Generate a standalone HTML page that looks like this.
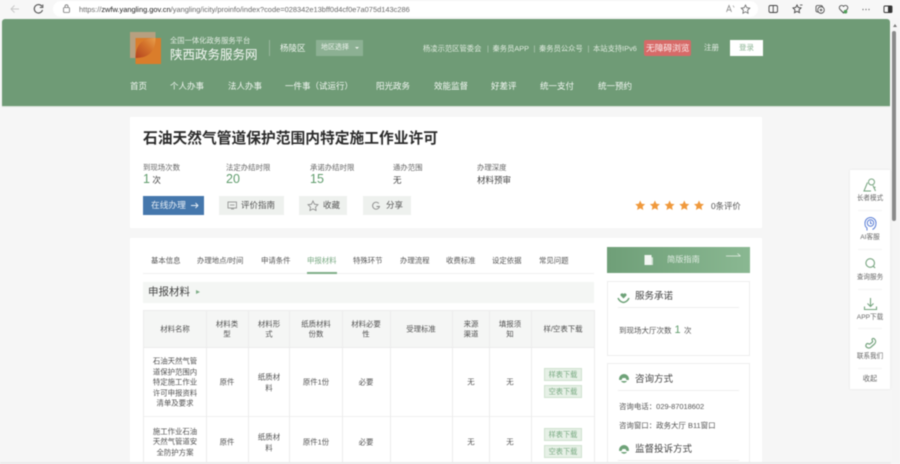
<!DOCTYPE html>
<html lang="zh">
<head>
<meta charset="utf-8">
<title>陕西政务服务网</title>
<style>
html,body{margin:0;padding:0;width:900px;height:464px;overflow:hidden;background:#f6f6f6}
body{font-family:"Liberation Sans","Noto Sans CJK SC",sans-serif;position:relative}
#w{position:absolute;left:0;top:0;width:900px;height:464px;overflow:hidden;filter:blur(.4px)}
.a{position:absolute;white-space:nowrap}
.b{position:absolute}
.nav{position:absolute;top:80px;font-size:8.5px;line-height:12px;color:#f2f7f2;white-space:nowrap}
.tl{position:absolute;top:43px;font-size:7.3px;line-height:11px;color:#dfeade;white-space:nowrap}
.tab{position:absolute;top:255px;font-size:7.4px;line-height:11px;color:#555;white-space:nowrap}
.lb{position:absolute;top:162px;font-size:7.4px;line-height:11px;color:#666;white-space:nowrap}
.v{position:absolute;top:171px;font-size:12.5px;line-height:16px;color:#5f9c6c;white-space:nowrap}
.btn{position:absolute;top:196px;height:19px;background:#eef1ee;color:#555;font-size:8.5px;line-height:19px;white-space:nowrap}
.l{position:absolute;background:#ececec}
.t{position:absolute;transform:translate(-50%,-50%);text-align:center;font-size:7.4px;line-height:10.6px;color:#505050;white-space:nowrap}
.dl{position:absolute;width:36px;height:11px;transform:translateX(-50%);background:#e6f0e6;border:1px solid #cfe2cf;color:#7bab84;font-size:7.2px;line-height:11px;text-align:center;box-sizing:content-box}
.side{position:absolute;left:850px;width:40px;text-align:center;font-size:6.6px;line-height:9px;color:#666;white-space:nowrap}
</style>
</head>
<body>
<div id="w">
<!-- browser chrome -->
<div class="b" style="left:0;top:0;width:900px;height:19px;background:#f7f7f7"></div>
<div class="b" style="left:53px;top:1px;width:705px;height:16px;background:#fff;border-radius:8px"></div>
<svg class="b" style="left:0;top:0" width="900" height="19" viewBox="0 0 900 19" fill="none">
<path d="M19 9H11M14.500 5.500L11 9l3.500 3.500" stroke="#c9c9c9" stroke-width="1"/>
<path d="M42 6.500A4.200 4.200 0 1 0 42.500 10" stroke="#555" stroke-width="1.100"/><path d="M42.800 4.500V7.500H39.800" stroke="#555" stroke-width="1"/>
<rect x="63.500" y="7.500" width="6" height="5" rx="1" stroke="#777" stroke-width=".8"/><path d="M65 7.500V6.300a1.500 1.500 0 0 1 3 0V7.500" stroke="#777" stroke-width=".8"/>
<path d="M723 12l2.500-6.500L728 12M724 10h3" stroke="#888" stroke-width=".8" transform="translate(3.500)"/><path d="M733 5.500l1.200 2" stroke="#888" stroke-width=".6"/>
<path d="M745.500 5l1.300 2.700 3 .4-2.200 2.100.5 3-2.600-1.400-2.600 1.400.5-3-2.200-2.100 3-.4z" stroke="#666" stroke-width=".8"/>
<rect x="769" y="5.500" width="8.500" height="7" rx="1.500" stroke="#444" stroke-width=".9"/><path d="M773.200 5.500v7" stroke="#444" stroke-width=".9"/>
<path d="M797 5l1.200 2.500 2.800.4-2 2 .5 2.800-2.500-1.300-2.500 1.300.5-2.800-2-2 2.800-.4z" stroke="#444" stroke-width=".9"/><path d="M800 5h2.500" stroke="#444" stroke-width=".8"/>
<rect x="816" y="5.500" width="6.500" height="6.500" rx="1.500" stroke="#444" stroke-width=".8"/><circle cx="821" cy="10" r="3.300" stroke="#444" stroke-width=".8" fill="#f7f7f7"/><path d="M821 8.500v3M819.500 10h3" stroke="#444" stroke-width=".7"/>
<path d="M843.500 13l-3.600-3.700a2.300 2.300 0 0 1 3.300-3.200l.3.300.4-.3a2.300 2.300 0 0 1 3.300 3.200z" stroke="#444" stroke-width=".9"/><circle cx="845.500" cy="11.700" r="1.800" fill="#4f9e58"/>
<circle cx="863" cy="9.500" r=".6" fill="#555"/><circle cx="866" cy="9.500" r=".6" fill="#555"/><circle cx="869" cy="9.500" r=".6" fill="#555"/>
<rect x="884" y="6" width="8" height="6.500" rx="1" stroke="#333" stroke-width=".9"/><rect x="888" y="6.500" width="3.500" height="5.500" fill="#333"/>
</svg>
<div class="a" style="left:79px;top:4px;font-size:7.450px;line-height:11px;color:#6a6a6a">https://<b style="color:#222;font-weight:400">zwfw.yangling.gov.cn</b>/yangling/icity/proinfo/index?code=028342e13bff0d4cf0e7a075d143c286</div>

<!-- header -->
<div class="b" style="left:2px;top:19px;width:888px;height:87px;background:#6f9b76;border-radius:3px 3px 0 0"></div>
<div class="b" style="left:2px;top:106px;width:888px;height:1px;background:#d9e3da"></div>
<svg class="b" style="left:129px;top:32px" width="34" height="32" viewBox="0 0 34 32">
<defs><linearGradient id="g" x1="0" y1="1" x2="1" y2="0"><stop offset="0" stop-color="#b4431f"/><stop offset=".6" stop-color="#d5752c"/><stop offset="1" stop-color="#e8a04d"/></linearGradient></defs>
<rect x="1" y="0" width="25.500" height="26" fill="#b7a080"/>
<rect x="6.500" y="6" width="25.500" height="26" fill="#da7d2b"/>
<path d="M6.500 26C6.500 13 13 6 26.500 6C26.500 19 20 26 6.500 26Z" fill="url(#g)"/>
</svg>
<div class="a" style="left:170px;top:35px;font-size:7.300px;line-height:11px;color:#e3ece3">全国一体化政务服务平台</div>
<div class="a" style="left:170px;top:46px;font-size:12.500px;line-height:18px;color:#f3f7f3">陕西政务服务网</div>
<div class="b" style="left:269px;top:40px;width:1px;height:16px;background:#98b79d"></div>
<div class="a" style="left:280px;top:42px;font-size:8.500px;line-height:12px;color:#eef4ee">杨陵区</div>
<div class="b" style="left:316px;top:40px;width:47px;height:16px;background:#8cb093"></div>
<div class="a" style="left:321px;top:43px;font-size:7px;line-height:10px;color:#e8f0e8">地区选择</div>
<div class="b" style="left:355px;top:47px;border-left:2px solid transparent;border-right:2px solid transparent;border-top:2px solid #e8f0e8"></div>

<div class="tl" style="left:423px">杨凌示范区管委会</div>
<div class="tl" style="left:487px;color:#bcd0bf">|</div>
<div class="tl" style="left:492.500px">秦务员APP</div>
<div class="tl" style="left:533.500px;color:#bcd0bf">|</div>
<div class="tl" style="left:539px">秦务员公众号</div>
<div class="tl" style="left:587.500px;color:#bcd0bf">|</div>
<div class="tl" style="left:593px">本站支持IPv6</div>
<div class="b" style="left:644px;top:40px;width:47px;height:16px;background:#d76a68;border-radius:2px"></div>
<div class="a" style="left:646px;top:42px;font-size:8.700px;line-height:12px;color:#fbecec">无障碍浏览</div>
<div class="a" style="left:704px;top:43px;font-size:7.500px;line-height:10px;color:#e6eee6">注册</div>
<div class="b" style="left:730px;top:40px;width:33px;height:16px;background:#fff"></div>
<div class="a" style="left:739px;top:43px;font-size:7.500px;line-height:10px;color:#8db595">登录</div>

<div class="nav" style="left:130px">首页</div>
<div class="nav" style="left:170px">个人办事</div>
<div class="nav" style="left:228px">法人办事</div>
<div class="nav" style="left:285px">一件事（试运行）</div>
<div class="nav" style="left:376px">阳光政务</div>
<div class="nav" style="left:434px">效能监督</div>
<div class="nav" style="left:491px">好差评</div>
<div class="nav" style="left:540px">统一支付</div>
<div class="nav" style="left:598px">统一预约</div>

<!-- title card -->
<div class="b" style="left:130px;top:117px;width:632px;height:111px;background:#fff"></div>
<div class="a" style="left:143px;top:128px;font-size:14.750px;line-height:22px;font-weight:700;color:#2b2b2b">石油天然气管道保护范围内特定施工作业许可</div>
<div class="lb" style="left:143px">到现场次数</div>
<div class="lb" style="left:226px">法定办结时限</div>
<div class="lb" style="left:310px">承诺办结时限</div>
<div class="lb" style="left:393px">通办范围</div>
<div class="lb" style="left:477px">办理深度</div>
<div class="v" style="left:143px">1<span style="font-size:8.500px;color:#444"> 次</span></div>
<div class="v" style="left:226px">20</div>
<div class="v" style="left:310px">15</div>
<div class="a" style="left:393px;top:174px;font-size:8.500px;line-height:12px;color:#444">无</div>
<div class="a" style="left:477px;top:174px;font-size:8.500px;line-height:12px;color:#444">材料预审</div>

<div class="b" style="left:143px;top:196px;width:61px;height:19px;background:#4577ac"></div>
<div class="a" style="left:151px;top:199px;font-size:8.700px;line-height:13px;color:#e5edf5">在线办理</div>
<svg class="b" style="left:190px;top:201px" width="10" height="9" fill="none"><path d="M1 4.500H8M5.500 2l2.500 2.500L5.500 7" stroke="#e5edf5" stroke-width=".9"/></svg>

<div class="btn" style="left:219px;width:65px"><span class="a" style="left:22px;top:0">评价指南</span></div>
<svg class="b" style="left:227px;top:201px" width="11" height="9" fill="none"><rect x="1" y="1" width="8.500" height="6" stroke="#888" stroke-width=".8"/><path d="M3 4h4.500M4 8h3" stroke="#888" stroke-width=".7"/></svg>
<div class="btn" style="left:299px;width:48px"><span class="a" style="left:24px;top:0">收藏</span></div>
<svg class="b" style="left:307px;top:200px" width="12" height="11" fill="none"><path d="M6 1l1.500 3.200 3.500.5-2.500 2.400.6 3.400L6 8.900l-3.100 1.600.6-3.400L1 4.700l3.500-.5z" stroke="#888" stroke-width=".8"/></svg>
<div class="btn" style="left:363px;width:48px"><span class="a" style="left:23px;top:0">分享</span></div>
<svg class="b" style="left:371px;top:201px" width="10" height="10" fill="none"><path d="M7.800 2.500A3.500 3.500 0 1 0 8.500 5.500H5.500" stroke="#888" stroke-width=".9"/></svg>

<svg class="b" style="left:635px;top:200px" width="72" height="12" viewBox="0 0 72 12" fill="#f0993c">
<path d="M5.200 .5l1.500 3.200 3.500.4-2.600 2.400.7 3.500-3.100-1.700-3.100 1.700.7-3.500L.2 4.100l3.500-.4z"/>
<path transform="translate(14.700)" d="M5.200 .5l1.500 3.200 3.500.4-2.600 2.400.7 3.500-3.100-1.700-3.100 1.700.7-3.500L.2 4.100l3.500-.4z"/>
<path transform="translate(29.400)" d="M5.200 .5l1.500 3.200 3.500.4-2.600 2.400.7 3.500-3.100-1.700-3.100 1.700.7-3.500L.2 4.100l3.500-.4z"/>
<path transform="translate(44.100)" d="M5.200 .5l1.500 3.200 3.500.4-2.600 2.400.7 3.500-3.100-1.700-3.100 1.700.7-3.500L.2 4.100l3.500-.4z"/>
<path transform="translate(58.800)" d="M5.200 .5l1.500 3.200 3.500.4-2.600 2.400.7 3.500-3.100-1.700-3.100 1.700.7-3.500L.2 4.100l3.500-.4z"/>
</svg>
<div class="a" style="left:711px;top:200px;font-size:8.400px;line-height:12px;color:#555">0条评价</div>

<!-- main card -->
<div class="b" style="left:130px;top:238px;width:632px;height:226px;background:#fff"></div>
<div class="tab" style="left:151px">基本信息</div>
<div class="tab" style="left:197px">办理地点/时间</div>
<div class="tab" style="left:261px">申请条件</div>
<div class="tab" style="left:307px;color:#79a983">申报材料</div>
<div class="tab" style="left:353px">特殊环节</div>
<div class="tab" style="left:400px">办理流程</div>
<div class="tab" style="left:446px">收费标准</div>
<div class="tab" style="left:492px">设定依据</div>
<div class="tab" style="left:539px">常见问题</div>
<div class="b" style="left:143px;top:273px;width:451px;height:1px;background:#f0f0f0"></div>
<div class="b" style="left:307px;top:272px;width:30px;height:2px;background:#7fae88"></div>
<div class="b" style="left:143px;top:282px;width:451px;height:21px;background:#f4f6f4"></div>
<div class="a" style="left:148px;top:285px;font-size:10.500px;line-height:15px;color:#444">申报材料</div>
<div class="b" style="left:196px;top:290px;border-left:4px solid #7fae88;border-top:2.500px solid transparent;border-bottom:2.500px solid transparent"></div>

<!-- table -->
<div class="b" style="left:143px;top:310px;width:451px;height:37px;background:#f5f6f5"></div>
<div class="l" style="left:143px;top:310px;width:451px;height:1px"></div>
<div class="l" style="left:143px;top:347px;width:451px;height:1px"></div>
<div class="l" style="left:143px;top:416px;width:451px;height:1px;background:#f0f0f0"></div>
<div class="l" style="left:143px;top:310px;width:1px;height:154px"></div>
<div class="l" style="left:206px;top:310px;width:1px;height:154px"></div>
<div class="l" style="left:248px;top:310px;width:1px;height:154px"></div>
<div class="l" style="left:289px;top:310px;width:1px;height:154px"></div>
<div class="l" style="left:342px;top:310px;width:1px;height:154px"></div>
<div class="l" style="left:390px;top:310px;width:1px;height:154px"></div>
<div class="l" style="left:452px;top:310px;width:1px;height:154px"></div>
<div class="l" style="left:489px;top:310px;width:1px;height:154px"></div>
<div class="l" style="left:531px;top:310px;width:1px;height:154px"></div>
<div class="l" style="left:594px;top:310px;width:1px;height:154px"></div>

<div class="t" style="left:175px;top:329.500px">材料名称</div>
<div class="t" style="left:227px;top:329.500px">材料类<br>型</div>
<div class="t" style="left:269px;top:329.500px">材料形<br>式</div>
<div class="t" style="left:316px;top:329.500px">纸质材料<br>份数</div>
<div class="t" style="left:366px;top:329.500px">材料必要<br>性</div>
<div class="t" style="left:421px;top:329.500px">受理标准</div>
<div class="t" style="left:471px;top:329.500px">来源<br>渠道</div>
<div class="t" style="left:510px;top:329.500px">填报须<br>知</div>
<div class="t" style="left:563px;top:329.500px">样/空表下载</div>

<div class="t" style="left:175px;top:383px">石油天然气管<br>道保护范围内<br>特定施工作业<br>许可申报资料<br>清单及要求</div>
<div class="t" style="left:227px;top:383px">原件</div>
<div class="t" style="left:269px;top:383px">纸质材<br>料</div>
<div class="t" style="left:316px;top:383px">原件1份</div>
<div class="t" style="left:366px;top:383px">必要</div>
<div class="t" style="left:471px;top:383px">无</div>
<div class="t" style="left:510px;top:383px">无</div>
<div class="dl" style="left:563px;top:368px">样表下载</div>
<div class="dl" style="left:563px;top:385px">空表下载</div>

<div class="t" style="left:175px;top:442.500px">施工作业石油<br>天然气管道安<br>全防护方案</div>
<div class="t" style="left:227px;top:443px">原件</div>
<div class="t" style="left:269px;top:443px">纸质材<br>料</div>
<div class="t" style="left:316px;top:443px">原件1份</div>
<div class="t" style="left:366px;top:443px">必要</div>
<div class="t" style="left:471px;top:443px">无</div>
<div class="t" style="left:510px;top:443px">无</div>
<div class="dl" style="left:563px;top:428px">样表下载</div>
<div class="dl" style="left:563px;top:445px">空表下载</div>

<!-- right column -->
<div class="b" style="left:607px;top:247px;width:143px;height:26px;background:linear-gradient(90deg,#6f9f78,#8ab892)"></div>
<svg class="b" style="left:643px;top:254px" width="12" height="12"><path d="M1.500 1h7v10h-7z" fill="#f2f6f2"/><path d="M8.500 3l1.500.5V11H8.500z" fill="#cfe0d2"/></svg>
<div class="a" style="left:667px;top:254px;font-size:8.200px;line-height:12px;color:#e0ece2">简版指南</div>
<svg class="b" style="left:725px;top:252px" width="17" height="7" fill="none"><path d="M1 4H15.500M12.500 1.500L15.500 4" stroke="#e8f0e8" stroke-width=".8"/></svg>

<div class="b" style="left:607px;top:281px;width:141px;height:73px;background:#fff;border:1px solid #eee"></div>
<svg class="b" style="left:617px;top:291px" width="13" height="13" viewBox="0 0 13 13"><path d="M6.500 7.500L3.500 4.500a1.700 1.700 0 0 1 3-1.500 1.700 1.700 0 0 1 3 1.500z" fill="#6ea278"/><path d="M1 7c1 2.500 3 4 5.500 4.500M12 7c-1 2.500-3 4-5.500 4.500" stroke="#6ea278" stroke-width="1.500" fill="none"/></svg>
<div class="a" style="left:635px;top:290px;font-size:9.500px;line-height:14px;color:#444">服务承诺</div>
<div class="b" style="left:618px;top:307px;width:121px;height:1px;background:#eee"></div>
<div class="a" style="left:619px;top:325px;font-size:7.500px;line-height:11px;color:#555">到现场大厅次数</div>
<div class="a" style="left:674.500px;top:322px;font-size:11px;line-height:16px;color:#5f9c6c">1</div>
<div class="a" style="left:684px;top:325px;font-size:7.500px;line-height:11px;color:#555">次</div>

<div class="b" style="left:607px;top:363px;width:141px;height:101px;background:#fff;border:1px solid #eee;border-bottom:0"></div>
<svg class="b" style="left:618px;top:373px" width="12" height="12" viewBox="0 0 12 12"><path d="M1 6a5 5 0 0 1 10 0c0 1-.5 1-1.500 1H8.500L7.500 5h-3L3.500 7H2.500C1.500 7 1 7 1 6z" fill="#6ea278"/><path d="M3 8h6a3.500 3.500 0 0 1-6 0z" fill="#6ea278"/></svg>
<div class="a" style="left:635px;top:373px;font-size:9.500px;line-height:14px;color:#444">咨询方式</div>
<div class="b" style="left:618px;top:390px;width:121px;height:1px;background:#eee"></div>
<div class="a" style="left:619px;top:401px;font-size:7.450px;line-height:11px;color:#555">咨询电话：029-87018602</div>
<div class="a" style="left:619px;top:420px;font-size:7.450px;line-height:11px;color:#555">咨询窗口：政务大厅 B11窗口</div>
<svg class="b" style="left:618px;top:444px" width="12" height="12" viewBox="0 0 12 12"><path d="M1 6a5 5 0 0 1 10 0c0 1-.5 1-1.500 1H8.500L7.500 5h-3L3.500 7H2.500C1.500 7 1 7 1 6z" fill="#6ea278"/><path d="M3 8h6a3.500 3.500 0 0 1-6 0z" fill="#6ea278"/></svg>
<div class="a" style="left:635px;top:443px;font-size:9.500px;line-height:14px;color:#444">监督投诉方式</div>
<div class="b" style="left:618px;top:460px;width:121px;height:1px;background:#eee"></div>

<!-- bottom window line -->
<div class="b" style="left:0;top:462px;width:900px;height:2px;background:#ececec"></div>

<!-- scrollbar -->
<div class="b" style="left:891px;top:19px;width:9px;height:445px;background:#f5f5f5"></div>
<div class="b" style="left:893px;top:24px;border-left:2px solid transparent;border-right:2px solid transparent;border-bottom:3px solid #777"></div>
<div class="b" style="left:892px;top:31px;width:4px;height:190px;background:#8a8a8a;border-radius:2px"></div>

<!-- side panel -->
<div class="b" style="left:850px;top:170px;width:40px;height:219px;background:#fff;box-shadow:0 0 3px rgba(0,0,0,.08)"></div>
<svg class="b" style="left:862px;top:177px" width="16" height="16" viewBox="0 0 16 16" fill="none" stroke="#76a47f" stroke-width="1"><circle cx="9.500" cy="5" r="3"/><path d="M5.500 5.500L2 14h7M11 8.500l2.500 5.500M11.500 11l2-1"/></svg>
<div class="side" style="top:194px">长者模式</div>
<div class="b" style="left:858px;top:210px;width:24px;height:1px;background:#f4f4f4"></div>
<svg class="b" style="left:863px;top:216px" width="15" height="17" viewBox="0 0 15 17" fill="none" stroke="#5c7fd6" stroke-width="1"><path d="M4 14.500V12C2 10.500 2 9 2 7a5.500 5.500 0 0 1 11 0c0 3-1.500 5.500-3.500 6.500"/><circle cx="7.500" cy="7" r="3.200"/><path d="M7.500 5v2.500H9"/></svg>
<div class="side" style="top:233px">AI客服</div>
<div class="b" style="left:858px;top:249px;width:24px;height:1px;background:#f4f4f4"></div>
<svg class="b" style="left:864px;top:257px" width="13" height="13" viewBox="0 0 13 13" fill="none" stroke="#76a47f" stroke-width="1.100"><circle cx="6.200" cy="6" r="4.300"/><path d="M9.300 9.200l1.800 1.800"/></svg>
<div class="side" style="top:273px">查询服务</div>
<div class="b" style="left:858px;top:289px;width:24px;height:1px;background:#f4f4f4"></div>
<svg class="b" style="left:863px;top:297px" width="15" height="14" viewBox="0 0 15 14" fill="none" stroke="#76a47f" stroke-width="1.100"><path d="M7.500 1v8M4.500 6.500l3 3 3-3M1.500 9.500V12.500h12V9.500"/></svg>
<div class="side" style="top:313px">APP下载</div>
<div class="b" style="left:858px;top:328px;width:24px;height:1px;background:#f4f4f4"></div>
<svg class="b" style="left:864px;top:337px" width="13" height="13" viewBox="0 0 13 13" fill="none" stroke="#76a47f" stroke-width="1.200"><path d="M2 9.500c1 1.500 3 2 4.500 1l4-3.500c1.500-1.500 1.500-3.500 0-5-1-1-2.500-.5-2.500.5 0 1 1 1.500.5 2.500L6 7c-1 .5-1.500-.5-2.500-.5S1.500 8 2 9.500z"/></svg>
<div class="side" style="top:352px">联系我们</div>
<div class="b" style="left:858px;top:368px;width:24px;height:1px;background:#f4f4f4"></div>
<div class="side" style="top:374px;font-size:7.200px">收起</div>
</div>
</body>
</html>
